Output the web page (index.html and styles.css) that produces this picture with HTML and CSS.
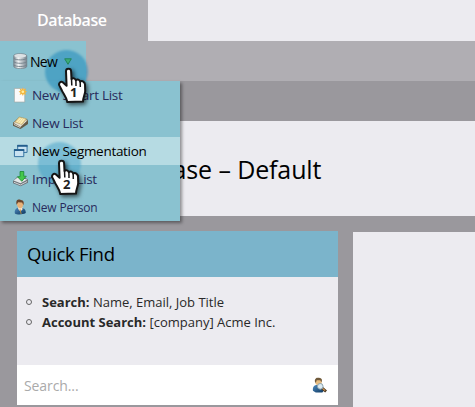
FILE: index.html
```html
<!DOCTYPE html>
<html lang="en">
<head>
<meta charset="utf-8">
<title>Database</title>
<link rel="stylesheet" href="styles.css">
</head>
<body>
<svg class="defs" aria-hidden="true">
  <defs>
    <symbol id="hand" viewBox="0 0 34 42">
      <path d="M8 4.2C8 1 13 1 13.1 4.2L13.5 12C15 10.7 17.2 11.3 17.8 13.2C19.4 11.8 21.5 12.5 22.2 14.6C24.2 13.3 26.8 14.7 27 17.5L27.2 24C27 27.5 25.2 29.5 25 34.6L9.3 35C8.7 30.5 5.5 27 3.8 23.3L1.3 18.4C.3 16 2.7 13.9 5 15.4L8.6 18.8Z" fill="#fff" stroke="#151515" stroke-width="2" stroke-linejoin="round"/>
      <path d="M13.5 11.5L13.8 18.5M17.9 13.2L18 19M22.2 14.8L22.3 20" fill="none" stroke="#151515" stroke-width="1.5"/>
    </symbol>
    <linearGradient id="metal"><stop offset="0" stop-color="#7d8992"/><stop offset=".35" stop-color="#f4f7f8"/><stop offset="1" stop-color="#75828c"/></linearGradient>
    <linearGradient id="suit" x2="1" y2="1"><stop stop-color="#4e8bc0"/><stop offset="1" stop-color="#0b345b"/></linearGradient>
  </defs>
</svg>
<nav class="tabs"><span class="tab">Database</span></nav>
<div class="toolbar">
  <div class="new-button">
    <svg class="icon" viewBox="0 0 15 16"><path d="M.7 2.8C.7-.1 13.8-.1 13.8 2.8V13.3C13.8 16.4.7 16.4.7 13.3Z" fill="url(#metal)" stroke="#75818a" stroke-width=".7"/><ellipse cx="7.25" cy="2.7" rx="6" ry="1.7" fill="#dce1e4"/><path d="M.8 5.4C3 7.4 11.5 7.4 13.7 5.4M.8 8.8C3 10.8 11.5 10.8 13.7 8.8M.8 12C3 14 11.5 14 13.7 12" fill="none" stroke="#727f89" stroke-width=".9"/></svg>
    <span class="label">New</span>
    <svg class="caret" viewBox="0 0 8 7"><path d="M.7.8H7.3L4 6.3Z" fill="#3cac79" stroke="#23855c"/></svg>
  </div>
  <div class="menu">
    <div class="item"><svg class="icon" viewBox="0 0 16 16"><path d="M1.5 1H12.5V15.5H1.5Z" fill="#fafafa" stroke="#a2a6a4" stroke-width=".7"/><path d="M10.5 0L11.5 2L14 1L13 3.5L15 4.5L13 5.5L14 8L11.5 7L10.5 9L9.5 7L7 8L8 5.5L6 4.5L8 3.5L7 1L9.5 2Z" fill="#f2b63f"/><circle cx="10.5" cy="4.5" r="1.4" fill="#fff0a2"/></svg><span class="label">New Smart List</span></div>
    <div class="item"><svg class="icon" viewBox="0 0 16 16"><path d="M0 8L8 12L16 5V9L8 14.5L0 11Z" fill="#655b48"/><path d="M0 8L6 3L16 5L8 12.5Z" fill="#e4ded0" stroke="#62543b" stroke-width=".7"/><path d="M2 7L6.5 1.5L14.5 3.5L9.5 9.5Z" fill="#eed99b" stroke="#a88942" stroke-width=".5"/><path d="M4 7L8 2.8M6 8L10 3.2M8 9L12 3.6" stroke="#fff5c2"/><path d="M1 9.5L7.8 12.8" stroke="#d8d6cf"/></svg><span class="label">New List</span></div>
    <div class="item active"><svg class="icon" viewBox="0 0 16 16"><path d="M5 2H15V9.5H5Z" fill="#c9e2f1" stroke="#2d6d9d"/><path d="M4.5 2.5H15.5" stroke="#245e8d" stroke-width="2"/><path d="M1.5 6.5H11.5V14H1.5Z" fill="#c9e2f1" stroke="#2d6d9d"/><path d="M1 7H12" stroke="#245e8d" stroke-width="2"/></svg><span class="label">New Segmentation</span></div>
    <div class="item"><svg class="icon" viewBox="0 0 16 16"><path d="M0 10L4 6H12L16 8.5V12L8 15.7L0 12.5Z" fill="#6e7479"/><path d="M.7 9.6L5 6.5L15.2 8.5L8 12.5Z" fill="#e4e8ea"/><path d="M1 11.5L8 14.3L15 10.7" fill="none" stroke="#d5dadd"/><path d="M7.5 0H11.5V5H14.2L9.4 10.5L4.7 5.5H7.5Z" fill="#45c84c" stroke="#16852b" stroke-width=".8"/></svg><span class="label">Import List</span></div>
    <div class="item"><svg class="icon" viewBox="0 0 16 16"><path d="M2 15C1.2 10.5 4 8.5 7.5 9C12 8.5 14 11 13.6 14.5C10 16.5 4 16.4 2 15Z" fill="url(#suit)"/><path d="M5.5 8H10V10.5L8 13L5.5 10Z" fill="#f6e6cf"/><path d="M4.3 3C4.5 0 11 0 11 3.2C11.4 7 9.5 9.5 7.5 9.5C5 9 3.8 6 4.3 3Z" fill="#e7b27a"/><path d="M3.8 5.5C2.5 0 6-.4 8.3.4C11.7.7 12 3.5 11 6L9.8 3.2L5.5 3Z" fill="#68442c"/><path d="M7.5 10.5L8.7 15.5" stroke="#b88735"/></svg><span class="label compact">New Person</span></div>
  </div>
  <i class="halo halo-one"></i><i class="halo halo-two"></i>
  <span class="pointer first"><svg class="hand"><use href="#hand"/></svg><b>1</b></span>
  <span class="pointer second"><svg class="hand"><use href="#hand"/></svg><b>2</b></span>
</div>
<main>
  <header class="page-header"><h1>Database – Default</h1></header>
  <div class="columns">
    <section class="quick-find">
      <h2>Quick Find</h2>
      <ul><li><strong>Search:</strong> Name, Email, Job Title</li><li><strong>Account Search:</strong> [company] Acme Inc.</li></ul>
      <div class="search"><span>Search...</span><svg class="icon" viewBox="0 0 16 16"><path d="M1 14C.5 10 2 8 6 8H10L13.5 13L11 16H4Z" fill="url(#suit)"/><path d="M4 2L10 1.5L10.4 7L7 9L3.7 7Z" fill="#e8bd80"/><path d="M3 4C3 0 6 0 7.5.3C10.5.5 11.3 3 10 5L8.8 3H5L4 6Z" fill="#705a3b"/><path d="M11 11.5L15 15" stroke="#4c371e" stroke-width="3"/><path d="M11 11.5L14 14" stroke="#ce9455" stroke-width="1.3"/><circle cx="8.8" cy="9.4" r="3" fill="#dceaf1" stroke="#849eac"/></svg></div>
    </section>
    <section class="detail"></section>
  </div>
</main>
</body>
</html>
```
FILE: styles.css
```css
* { box-sizing: border-box; }
body { margin: 0; height: 407px; overflow: hidden; background: #9a989d; color: #000; font-family: "Open Sans", "Noto Sans", sans-serif; }
.defs { position: absolute; width: 0; height: 0; }
.tabs { height: 41px; background: #ecebf0; }
.tab { display: block; width: 148px; height: 41px; padding-left: 37px; background: #b0aeb3; color: #fff; font-size: 16px; font-weight: 600; line-height: 40px; letter-spacing: -.4px; }
.toolbar { position: relative; z-index: 2; height: 40px; background: #b0aeb3; }
.new-button { display: flex; align-items: center; width: 86px; height: 40px; padding-left: 13px; background: #8ac2d0; font-size: 14px; letter-spacing: -.7px; }
.icon { width: 15px; height: 16px; flex: none; }
.label { position: relative; z-index: 3; margin-left: 4px; }
.new-button .label { margin-left: 2px; }
.caret { position: relative; z-index: 3; width: 8px; height: 7px; margin-left: 7px; }
.menu { position: absolute; top: 40px; left: 0; width: 180px; height: 140px; background: #8ac2d0; box-shadow: 2px 2px 3px #0006; }
.item { display: flex; align-items: center; height: 28px; padding-left: 13px; color: #282b5c; font-size: 13.5px; letter-spacing: -.3px; }
.item .compact { font-size: 12px; letter-spacing: -.2px; }
.active { background: #b6dbe3; color: #000; }
.halo { position: absolute; z-index: 2; width: 43px; height: 43px; border-radius: 50%; filter: blur(1px); }
.halo-one { left: 45px; top: 9px; background: #278dbc99; }
.halo-two { left: 38px; top: 101px; background: #409fc780; }
.pointer { position: absolute; z-index: 4; width: 34px; height: 42px; }
.first { left: 58px; top: 26px; }
.second { left: 51px; top: 118px; }
.hand { position: absolute; left: 0; top: 0; width: 34px; height: 42px; overflow: visible; filter: drop-shadow(2px 2px 2px #0009); }
.pointer b { position: absolute; left: 12px; top: 17px; color: #222; font: bold 13px/16px "Open Sans", sans-serif; }
.page-header { height: 95px; margin-top: 40px; padding-left: 103px; background: #ecebf0; }
h1 { margin: 0; font-size: 25px; font-weight: 400; line-height: 96px; letter-spacing: -.12px; white-space: nowrap; }
.columns { display: grid; grid-template-columns: 321px 1fr; gap: 15px; padding: 15px 0 0 17px; }
h2 { height: 46px; margin: 0; padding-left: 10px; background: #7bb4cb; font-size: 18.5px; font-weight: 400; line-height: 46px; letter-spacing: -.3px; }
ul { height: 88px; margin: 0; padding: 15px 0 0 25px; background: #ecebf0; color: #292929; font-size: 13px; line-height: 20px; list-style: none; }
li { position: relative; }
li::before { content: ""; box-sizing: border-box; position: absolute; left: -16px; top: 7px; width: 6px; height: 6px; border: 1.5px solid #666; border-radius: 50%; }
.search { display: flex; align-items: center; justify-content: space-between; height: 40px; padding: 0 11px 0 7px; background: #fff; color: #aaa; font-size: 14px; letter-spacing: -.1px; }
.detail { margin-top: 1px; height: 180px; background: #ecebf0; }
```
